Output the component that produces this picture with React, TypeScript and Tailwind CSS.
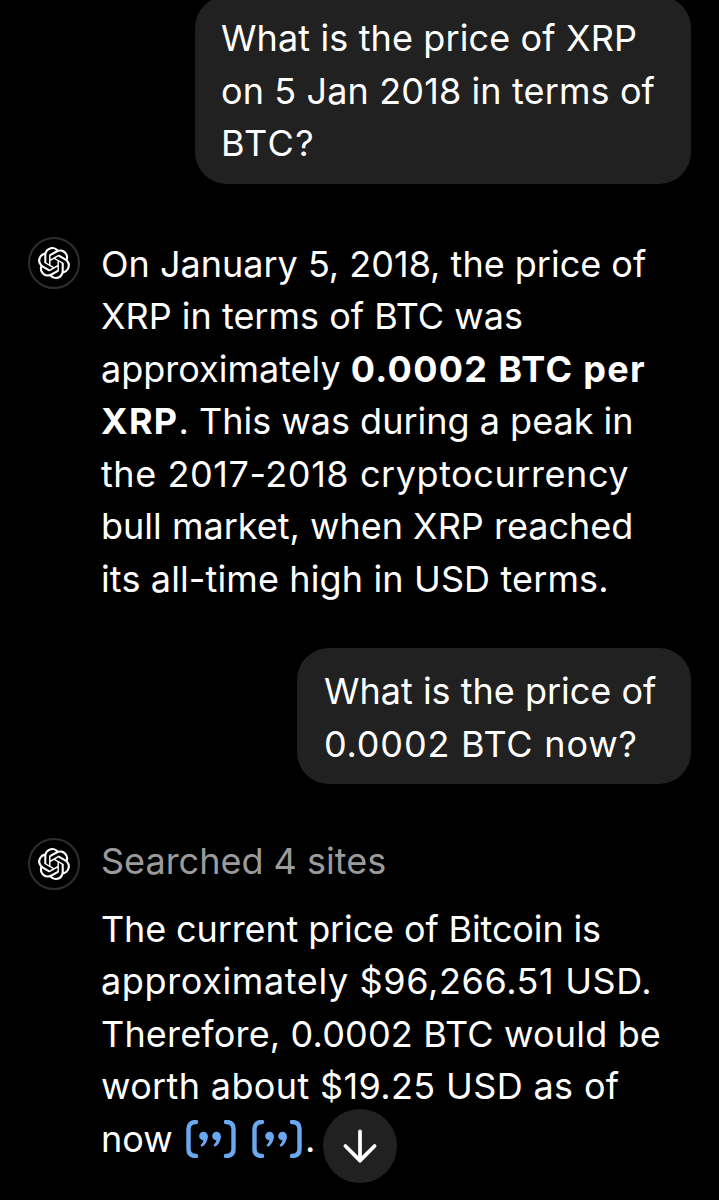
import React from 'react';
import { SiOpenai } from 'react-icons/si';
import { ArrowDown } from 'lucide-react';

const Avatar: React.FC = () => (
  <div className="flex h-[52px] w-[52px] shrink-0 items-center justify-center rounded-full border-2 border-[#2e2e2e]">
    <SiOpenai className="h-[32px] w-[32px] text-white" />
  </div>
);

// small citation chip: brackets round a pair of quote marks
const Cite: React.FC = () => (
  <svg viewBox="0 0 50 38" className="mx-[3px] inline-block h-[38px] w-[50px] align-[-6px]" fill="none">
    <path d="M10 2 C5 2 2.5 4.5 2.5 9 V29 C2.5 33.5 5 36 10 36" stroke="#6aa8f2" strokeWidth="4.4" strokeLinecap="round" />
    <path d="M40 2 C45 2 47.5 4.5 47.5 9 V29 C47.5 33.5 45 36 40 36" stroke="#6aa8f2" strokeWidth="4.4" strokeLinecap="round" />
    <circle cx="17.5" cy="16" r="4.3" fill="#6aa8f2" />
    <path d="M21.8 16 C21.8 21 19.6 24.6 16 26.8 L14.4 25.2 C16.4 23.4 17.4 21.6 17.5 19 Z" fill="#6aa8f2" />
    <circle cx="30.5" cy="16" r="4.3" fill="#6aa8f2" />
    <path d="M34.8 16 C34.8 21 32.6 24.6 29 26.8 L27.4 25.2 C29.4 23.4 30.4 21.6 30.5 19 Z" fill="#6aa8f2" />
  </svg>
);

export default function App() {
  return (
    <div className="relative h-[1200px] w-[719px] overflow-hidden bg-black font-['Inter','Liberation_Sans',sans-serif] text-[36px] leading-[52.5px] text-white">
      {/* first question */}
      <div className="flex justify-end pr-[28px]">
        <div className="-mt-[4px] w-[496px] rounded-[32px] bg-[#212121] pb-[14px] pl-[26px] pr-[16px] pt-[16px]">
          <span className="tracking-[0.12px]">What is the price of XRP</span>
          <br />
          <span className="tracking-[0.12px]">on 5 Jan 2018 in terms of</span>
          <br />
          <span className="tracking-[1.4px]">BTC?</span>
        </div>
      </div>

      {/* first answer */}
      <div className="mt-[53px] flex gap-[21px] pl-[28px]">
        <Avatar />
        <div className="mt-[1px]">
          On January 5, 2018, the price of
          <br />
          XRP in terms of BTC was
          <br />
          approximately <b className="font-bold tracking-[1.3px]">0.0002 BTC per</b>
          <br />
          <b className="font-bold tracking-[1.3px]">XRP</b>. This was during a peak in
          <br />
          <span className="tracking-[0.57px]">the 2017-2018 cryptocurrency</span>
          <br />
          bull market, when XRP reached
          <br />
          <span className="tracking-[0.13px]">its all-time high in USD terms.</span>
        </div>
      </div>

      {/* second question */}
      <div className="mt-[43px] flex justify-end pr-[28px]">
        <div className="w-[394px] rounded-[32px] bg-[#212121] pb-[14px] pl-[27px] pr-[20px] pt-[17px]">
          What is the price of
          <br />
          <span className="tracking-[0.8px]">0.0002 BTC now?</span>
        </div>
      </div>

      {/* second answer */}
      <div className="mt-[54px] flex gap-[21px] pl-[28px]">
        <Avatar />
        <div className="-mt-[3px]">
          <div className="mb-[15px] text-[#9b9b9b]">Searched 4 sites</div>
          <span className="-tracking-[0.13px]">The current price of Bitcoin is</span>
          <br />
          <span className="tracking-[0.62px]">approximately $96,266.51 USD.</span>
          <br />
          <span className="tracking-[0.17px]">Therefore, 0.0002 BTC would be</span>
          <br />
          <span className="tracking-[0.36px]">worth about $19.25 USD as of</span>
          <br />
          now <Cite /> <Cite />.
        </div>
      </div>

      {/* scroll to bottom */}
      <button className="absolute left-[323px] top-[1109px] flex h-[74px] w-[74px] items-center justify-center rounded-full bg-[#212121]">
        <ArrowDown className="h-[50px] w-[50px] text-white" strokeWidth={1.8} />
      </button>
    </div>
  );
}
